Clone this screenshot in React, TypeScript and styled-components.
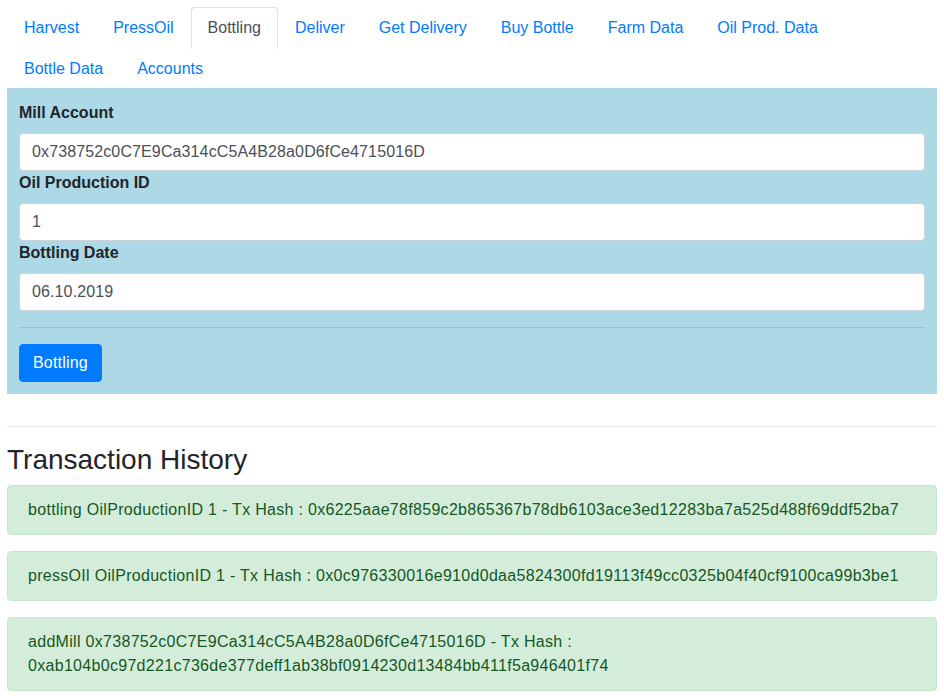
import React from "react";
import styled, { createGlobalStyle } from "styled-components";

const Global = createGlobalStyle`
  html, body { margin: 0; padding: 0; background: #fff; }
  body {
    font-family: "Liberation Sans", Arial, sans-serif;
    font-size: 16px;
    line-height: 1.5;
    color: #212529;
  }
  * { box-sizing: border-box; }
`;

const Page = styled.div`
  padding: 7px 7px 0;
`;

const Tabs = styled.nav`
  display: flex;
  flex-wrap: wrap;
`;

const Tab = styled.a<{ $active?: boolean }>`
  display: block;
  padding: 8px 16px;
  margin-bottom: -1px;
  border: 1px solid transparent;
  border-color: ${(p) => (p.$active ? "#dee2e6 #dee2e6 #fff" : "transparent")};
  border-top-left-radius: 4px;
  border-top-right-radius: 4px;
  color: ${(p) => (p.$active ? "#495057" : "#007bff")};
  background: ${(p) => (p.$active ? "#fff" : "transparent")};
  text-decoration: none;
  cursor: pointer;
  line-height: 24px;
`;

const Panel = styled.div`
  margin-top: -1px;
  background: lightblue;
  padding: 13px 12px 12px;
`;

const Label = styled.label`
  display: block;
  font-weight: 700;
  margin-bottom: 8px;
  line-height: 24px;
`;

const Input = styled.input`
  display: block;
  width: 100%;
  height: 38px;
  padding: 6px 12px;
  font-family: inherit;
  font-size: 16px;
  line-height: 24px;
  letter-spacing: 0.12px;
  color: #495057;
  background: #fff;
  border: 1px solid #ced4da;
  border-radius: 4px;
  outline: none;
`;

const Rule = styled.hr<{ $gap?: number }>`
  margin: ${(p) => p.$gap ?? 16}px 0 16px;
  border: 0;
  border-top: 1px solid rgba(0, 0, 0, 0.1);
`;

const Button = styled.button`
  display: inline-block;
  padding: 6px 13px;
  font-family: inherit;
  font-size: 16px;
  line-height: 24px;
  letter-spacing: 0.2px;
  color: #fff;
  background: #007bff;
  border: 1px solid #007bff;
  border-radius: 4px;
  cursor: pointer;
`;

const Heading = styled.h3`
  margin: 0 0 8px;
  font-size: 28px;
  font-weight: 500;
  line-height: 1.2;
`;

const Alert = styled.div`
  padding: 12px 20px;
  margin-bottom: 16px;
  border: 1px solid #c3e6cb;
  border-radius: 4px;
  background: #d4edda;
  color: #155724;
  letter-spacing: 0.3px;
  word-wrap: break-word;
`;

const tabs = [
  "Harvest",
  "PressOil",
  "Bottling",
  "Deliver",
  "Get Delivery",
  "Buy Bottle",
  "Farm Data",
  "Oil Prod. Data",
  "Bottle Data",
  "Accounts",
];

const txs = [
  "bottling OilProductionID 1 - Tx Hash : 0x6225aae78f859c2b865367b78db6103ace3ed12283ba7a525d488f69ddf52ba7",
  "pressOIl OilProductionID 1 - Tx Hash : 0x0c976330016e910d0daa5824300fd19113f49cc0325b04f40cf9100ca99b3be1",
  "addMill 0x738752c0C7E9Ca314cC5A4B28a0D6fCe4715016D - Tx Hash : 0xab104b0c97d221c736de377deff1ab38bf0914230d13484bb411f5a946401f74",
];

export default function App() {
  return (
    <Page>
      <Global />
      <Tabs>
        {tabs.map((t) => (
          <Tab key={t} $active={t === "Bottling"}>
            {t}
          </Tab>
        ))}
      </Tabs>
      <Panel>
        <Label>Mill Account</Label>
        <Input readOnly value="0x738752c0C7E9Ca314cC5A4B28a0D6fCe4715016D" />
        <Label>Oil Production ID</Label>
        <Input readOnly value="1" />
        <Label>Bottling Date</Label>
        <Input readOnly value="06.10.2019" />
        <Rule />
        <Button>Bottling</Button>
      </Panel>
      <Rule $gap={32} />
      <Heading>Transaction History</Heading>
      {txs.map((t) => (
        <Alert key={t}>{t}</Alert>
      ))}
    </Page>
  );
}
